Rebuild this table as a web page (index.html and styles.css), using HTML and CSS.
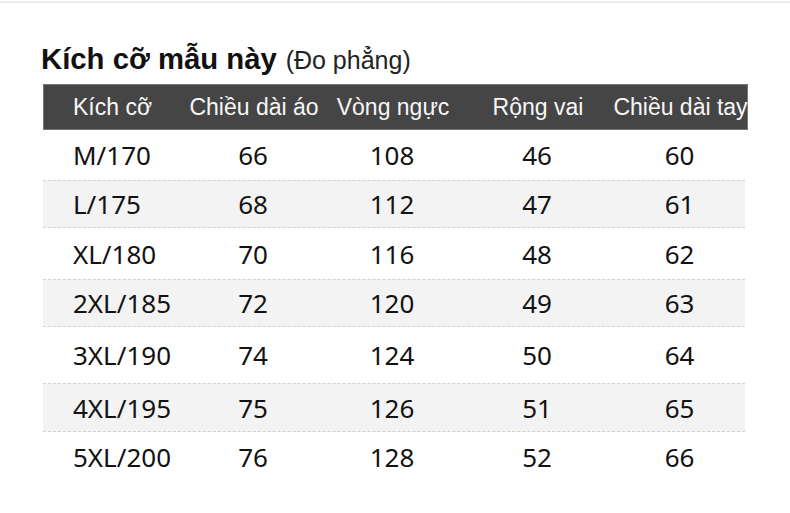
FILE: index.html
```html
<!DOCTYPE html>
<html lang="vi">
<head>
<meta charset="utf-8">
<title>Kích cỡ mẫu này</title>
<link rel="stylesheet" href="styles.css">
</head>
<body>
<div class="topline"></div>
<main class="wrap">
  <h1 class="title"><span class="title-main">Kích cỡ mẫu này</span> <span class="title-sub">(Đo phẳng)</span></h1>
  <div class="table">
    <div class="row head">
      <div class="cell first">Kích cỡ</div>
      <div class="cell">Chiều dài áo</div>
      <div class="cell">Vòng ngực</div>
      <div class="cell">Rộng vai</div>
      <div class="cell">Chiều dài tay</div>
    </div>
    <div class="row r1">
      <div class="cell first">M/170</div><div class="cell">66</div><div class="cell">108</div><div class="cell">46</div><div class="cell">60</div>
    </div>
    <div class="row r2 alt">
      <div class="cell first">L/175</div><div class="cell">68</div><div class="cell">112</div><div class="cell">47</div><div class="cell">61</div>
    </div>
    <div class="row r3">
      <div class="cell first">XL/180</div><div class="cell">70</div><div class="cell">116</div><div class="cell">48</div><div class="cell">62</div>
    </div>
    <div class="row r4 alt">
      <div class="cell first">2XL/185</div><div class="cell">72</div><div class="cell">120</div><div class="cell">49</div><div class="cell">63</div>
    </div>
    <div class="row r5">
      <div class="cell first">3XL/190</div><div class="cell">74</div><div class="cell">124</div><div class="cell">50</div><div class="cell">64</div>
    </div>
    <div class="row r6 alt">
      <div class="cell first">4XL/195</div><div class="cell">75</div><div class="cell">126</div><div class="cell">51</div><div class="cell">65</div>
    </div>
    <div class="row r7">
      <div class="cell first">5XL/200</div><div class="cell">76</div><div class="cell">128</div><div class="cell">52</div><div class="cell">66</div>
    </div>
  </div>
</main>
</body>
</html>
```
FILE: styles.css
```css
html, body {
  margin: 0;
  padding: 0;
  background: #ffffff;
}
body {
  width: 790px;
  height: 513px;
  overflow: hidden;
  font-family: "Liberation Sans", Arial, sans-serif;
}
.topline {
  height: 2px;
  margin-top: 1px;
  background: #ededed;
}
.wrap {
  padding: 0 42px 0 43px;
}
.title {
  margin: 39px 0 10px -2px;
  height: 32px;
  line-height: 32px;
  font-weight: normal;
  white-space: nowrap;
}
.title-main {
  font-size: 29.3px;
  font-weight: bold;
  color: #111111;
}
.title-sub {
  font-size: 25px;
  color: #222222;
}
.table {
  width: 705px;
}
.row {
  display: grid;
  grid-template-columns: 142px 136px 142px 148px 137px;
  align-items: center;
  box-sizing: border-box;
  height: 50px;
  font-family: "Noto Sans", "Open Sans", sans-serif;
  font-size: 26px;
  color: #121212;
}
.cell {
  text-align: center;
  white-space: nowrap;
}
.cell.first {
  text-align: left;
  padding-left: 30px;
}
.row.head {
  height: 46px;
  background: #454545;
  border: 1px solid #777777;
  font-family: "Liberation Sans", Arial, sans-serif;
  font-size: 23px;
  color: #f7f7f7;
}
.row.head .cell.first {
  padding-left: 29px;
}
.row.alt {
  width: 702px;
  background: #f3f3f3;
  border-top: 1px dashed #d2d2d2;
  border-bottom: 1px dashed #d2d2d2;
}
.r1 { height: 50px; }
.r2 { height: 48px; }
.r3 { height: 51px; }
.r4 { height: 48px; }
.r5 { height: 56px; }
.r6 { height: 49px; }
.r7 { height: 50px; }
```
